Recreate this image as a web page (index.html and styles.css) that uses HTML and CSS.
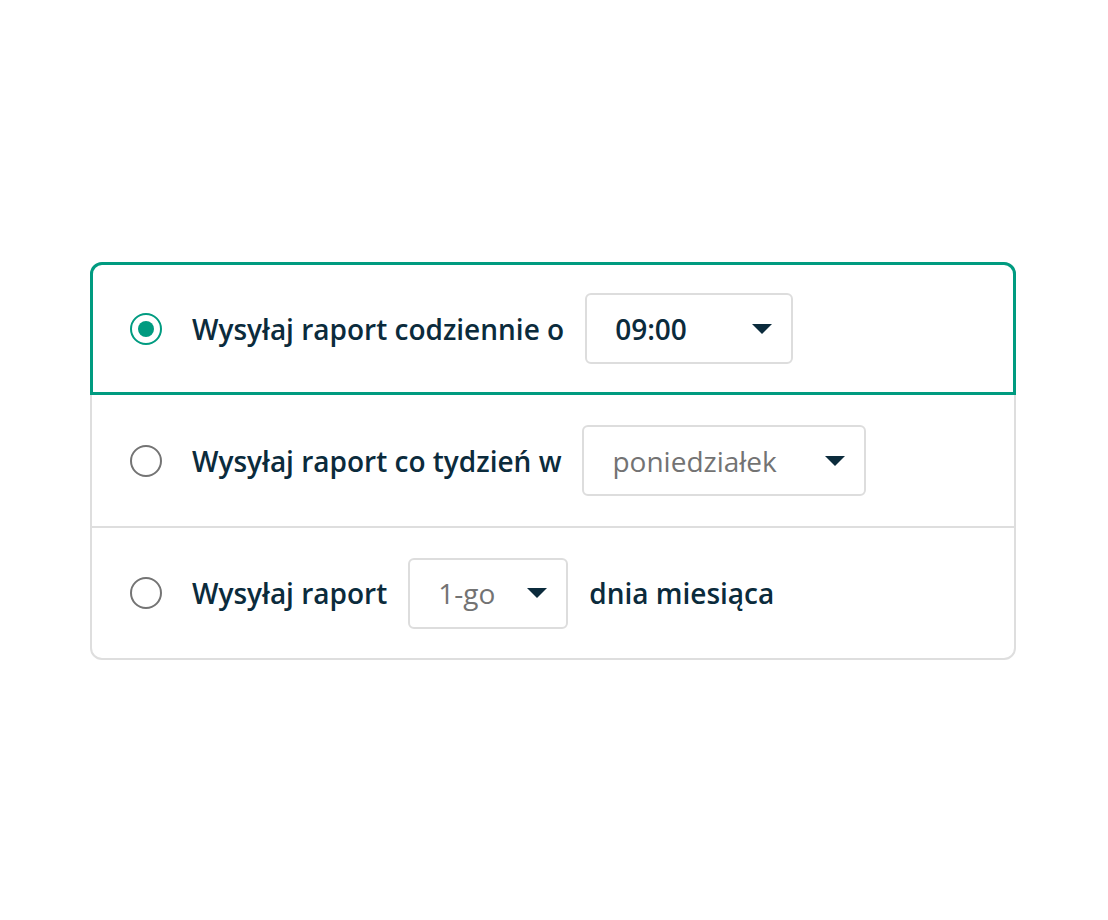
FILE: index.html
```html
<!DOCTYPE html>
<html lang="pl">
<head>
    <meta charset="utf-8">
    <title>Raport</title>
    <link rel="stylesheet" href="styles.css">
</head>
<body>
    <div class="schedule">
        <div class="option option-selected">
            <span class="radio radio-on"></span>
            <span class="label">Wysyłaj raport codziennie o</span>
            <div class="select select-time">
                <span class="value value-set">09:00</span>
                <svg class="caret" width="20" height="10" viewBox="0 0 20 10"><path d="M0 0h20L10 10z" /></svg>
            </div>
        </div>
        <div class="option">
            <span class="radio"></span>
            <span class="label">Wysyłaj raport co tydzień w</span>
            <div class="select select-day">
                <span class="value">poniedziałek</span>
                <svg class="caret" width="20" height="10" viewBox="0 0 20 10"><path d="M0 0h20L10 10z" /></svg>
            </div>
        </div>
        <div class="option option-last">
            <span class="radio"></span>
            <span class="label">Wysyłaj raport</span>
            <div class="select select-month">
                <span class="value">1-go</span>
                <svg class="caret" width="20" height="10" viewBox="0 0 20 10"><path d="M0 0h20L10 10z" /></svg>
            </div>
            <span class="label">dnia miesiąca</span>
        </div>
    </div>
</body>
</html>
```

FILE: styles.css
```css
body {
    margin: 0;
    background: #ffffff;
    font-family: "Open Sans", "Noto Sans", sans-serif;
    color: #0b2b3c;
}

.schedule {
    width: 922px;
    margin: 262px 0 0 90px;
    border: 2px solid #dedede;
    border-radius: 12px;
}

.option {
    display: flex;
    align-items: center;
    gap: 21px;
    height: 131px;
    padding-left: 38px;
    border-bottom: 2px solid #dedede;
}

.option-selected {
    margin: -2px -2px 0;
    height: 127px;
    padding-left: 37px;
    border: 3px solid #009b80;
    border-radius: 12px 12px 0 0;
}

.option-last {
    border-bottom: none;
    height: 130px;
}

.radio {
    width: 32px;
    height: 32px;
    box-sizing: border-box;
    border: 2px solid #747474;
    border-radius: 50%;
    margin-right: 9px;
    flex: none;
    display: flex;
    align-items: center;
    justify-content: center;
}

.radio-on {
    border-color: #009b80;
}

.radio-on::after {
    content: "";
    width: 16px;
    height: 16px;
    border-radius: 50%;
    background: #009b80;
}

.label {
    font-size: 28px;
    font-weight: 600;
}

.select {
    display: flex;
    align-items: center;
    justify-content: space-between;
    box-sizing: border-box;
    height: 71px;
    padding: 0 19px 0 28px;
    border: 2px solid #dddddd;
    border-radius: 6px;
}

.select-time { width: 208px; }
.select-day { width: 284px; }
.select-month { width: 160px; }

.value {
    font-size: 28px;
    color: #737373;
}

.value-set {
    color: #0b2b3c;
    font-weight: 600;
}

.caret {
    fill: #0b2b3c;
}
```
